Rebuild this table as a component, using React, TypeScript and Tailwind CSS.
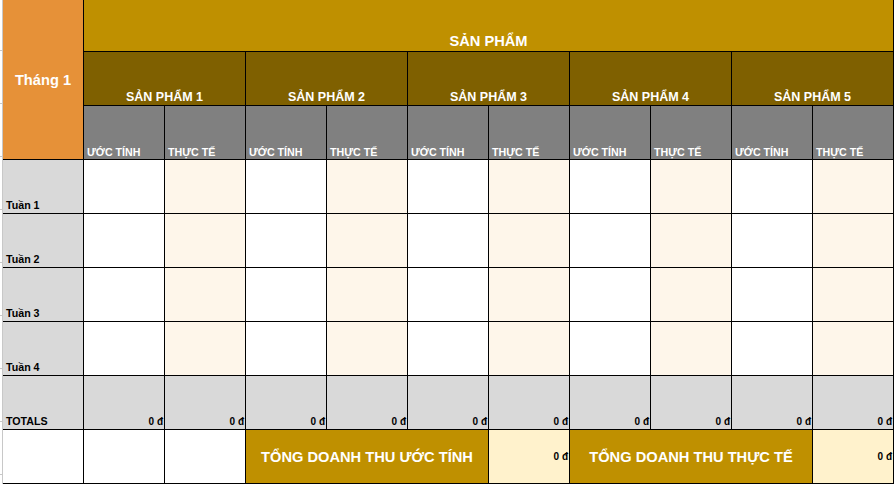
const products = [1, 2, 3, 4, 5];
const weeks = ["Tuần 1", "Tuần 2", "Tuần 3", "Tuần 4"];

// columns alternate: ước tính (white) / thực tế (cream)
const cols = Array.from({ length: 10 }, (_, i) => i);

export default function App() {
  return (
    <div className="flex w-[894px] h-[485px] bg-white font-['Liberation_Sans',Arial,sans-serif] overflow-hidden">
      {/* spreadsheet gutter */}
      <div className="flex w-[2px] flex-col">
        <div className="h-[51px] shrink-0 border-b border-[#c8c8c8]" />
        {Array.from({ length: 8 }, (_, i) => (
          <div key={i} className="h-[53px] shrink-0 border-b border-[#c8c8c8]" />
        ))}
      </div>

      <div className="grid h-[484px] grid-cols-[repeat(11,80px)] grid-rows-[51px_repeat(8,53px)] gap-px border-l border-[#c8c8c8] bg-black pr-px pb-px">
        <div className="row-span-3 flex items-center justify-center bg-[#e69138] text-[14.67px] font-bold text-white">
          Tháng 1
        </div>
        <div className="col-span-10 flex items-end justify-center bg-[#bf9000] pb-[2px] text-[14.67px] leading-none font-bold text-white">
          SẢN PHẨM
        </div>

        {products.map((p) => (
          <div
            key={p}
            className="col-span-2 flex items-end justify-center bg-[#7f6000] pb-[2px] text-[12.5px] leading-none font-bold text-white"
          >
            SẢN PHẨM {p}
          </div>
        ))}

        {cols.map((c) => (
          <div
            key={c}
            className="flex items-end bg-[#808080] pb-px pl-[3px] text-[10.67px] leading-none font-bold text-white"
          >
            {c % 2 === 0 ? "ƯỚC TÍNH" : "THỰC TẾ"}
          </div>
        ))}

        {weeks.map((w) => (
          <div key={w} className="contents">
            <div className="flex items-end bg-[#d9d9d9] pb-[2px] pl-[3px] text-[10.67px] leading-none font-bold text-black">
              {w}
            </div>
            {cols.map((c) => (
              <div key={c} className={c % 2 === 0 ? "bg-white" : "bg-[#fef6ea]"} />
            ))}
          </div>
        ))}

        <div className="flex items-end bg-[#d9d9d9] pb-[2px] pl-[3px] text-[10.67px] leading-none font-bold text-black">
          TOTALS
        </div>
        {cols.map((c) => (
          <div
            key={c}
            className="flex items-end justify-end bg-[#d9d9d9] pr-px pb-[2px] text-[10px] leading-none font-bold text-black"
          >
            0 đ
          </div>
        ))}

        <div className="bg-white" />
        <div className="bg-white" />
        <div className="bg-white" />
        <div className="col-span-3 flex items-center justify-center bg-[#bf9000] text-[14.67px] font-bold text-white">
          TỔNG DOANH THU ƯỚC TÍNH
        </div>
        <div className="flex items-center justify-end bg-[#fff2cc] pr-px text-[10px] font-bold text-black">
          0 đ
        </div>
        <div className="col-span-3 flex items-center justify-center bg-[#bf9000] text-[14.67px] font-bold text-white">
          TỔNG DOANH THU THỰC TẾ
        </div>
        <div className="flex items-center justify-end bg-[#fff2cc] pr-px text-[10px] font-bold text-black">
          0 đ
        </div>
      </div>
    </div>
  );
}
